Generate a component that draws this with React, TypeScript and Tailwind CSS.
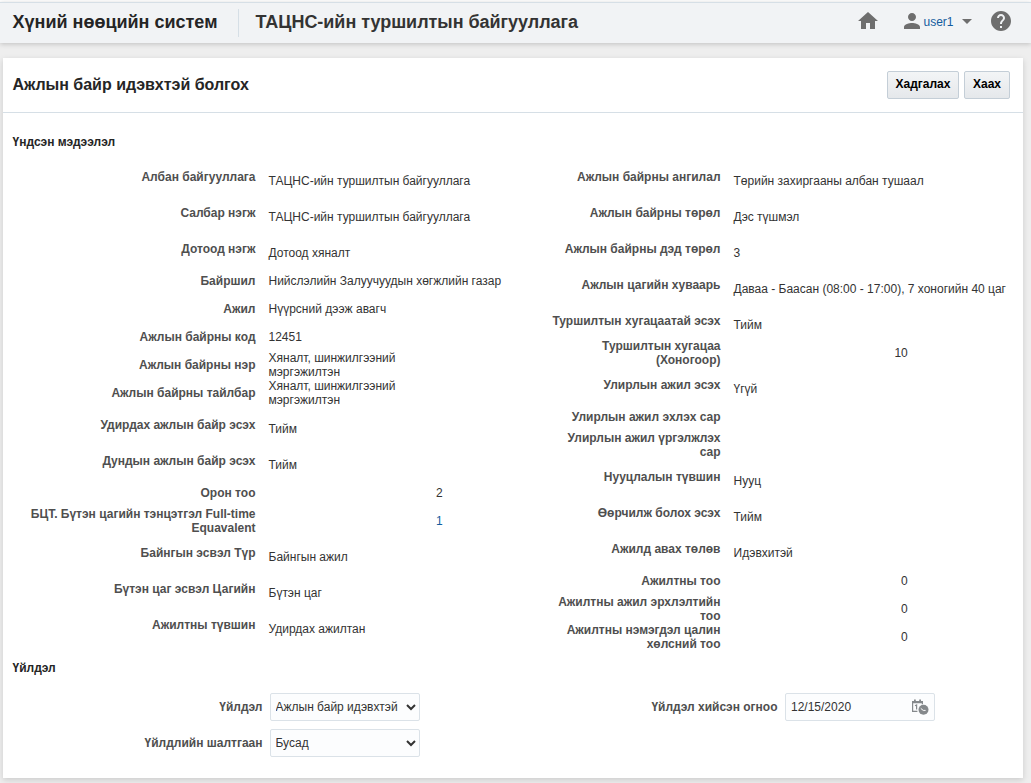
import React from "react";
import { MdHelp, MdHome, MdPerson } from "react-icons/md";

type Field = {
  label: string[];
  value?: string[];
  kind: "text" | "choice" | "number";
  tone?: string;
};

const leftFields: Field[] = [
  { label: ["Албан байгууллага"], value: ["ТАЦНС-ийн туршилтын байгууллага"], kind: "choice" },
  { label: ["Салбар нэгж"], value: ["ТАЦНС-ийн туршилтын байгууллага"], kind: "choice" },
  { label: ["Дотоод нэгж"], value: ["Дотоод хяналт"], kind: "choice" },
  { label: ["Байршил"], value: ["Нийслэлийн Залуучуудын хөгжлийн газар"], kind: "text" },
  { label: ["Ажил"], value: ["Нүүрсний дээж авагч"], kind: "text" },
  { label: ["Ажлын байрны код"], value: ["12451"], kind: "text" },
  { label: ["Ажлын байрны нэр"], value: ["Хяналт, шинжилгээний", "мэргэжилтэн"], kind: "text" },
  { label: ["Ажлын байрны тайлбар"], value: ["Хяналт, шинжилгээний", "мэргэжилтэн"], kind: "text" },
  { label: ["Удирдах ажлын байр эсэх"], value: ["Тийм"], kind: "choice" },
  { label: ["Дундын ажлын байр эсэх"], value: ["Тийм"], kind: "choice" },
  { label: ["Орон тоо"], value: ["2"], kind: "number" },
  {
    label: ["БЦТ. Бүтэн цагийн тэнцэтгэл Full-time", "Equavalent"],
    value: ["1"],
    kind: "number",
    tone: "text-[#145c9e]",
  },
  { label: ["Байнгын эсвэл Түр"], value: ["Байнгын ажил"], kind: "choice" },
  { label: ["Бүтэн цаг эсвэл Цагийн"], value: ["Бүтэн цаг"], kind: "choice" },
  { label: ["Ажилтны түвшин"], value: ["Удирдах ажилтан"], kind: "choice" },
];

const rightFields: Field[] = [
  { label: ["Ажлын байрны ангилал"], value: ["Төрийн захиргааны албан тушаал"], kind: "choice" },
  { label: ["Ажлын байрны төрөл"], value: ["Дэс түшмэл"], kind: "choice" },
  { label: ["Ажлын байрны дэд төрөл"], value: ["3"], kind: "choice" },
  { label: ["Ажлын цагийн хуваарь"], value: ["Даваа - Баасан (08:00 - 17:00), 7 хоногийн 40 цаг"], kind: "choice" },
  { label: ["Туршилтын хугацаатай эсэх"], value: ["Тийм"], kind: "choice" },
  { label: ["Туршилтын хугацаа", "(Хоногоор)"], value: ["10"], kind: "number" },
  { label: ["Улирлын ажил эсэх"], value: ["Үгүй"], kind: "choice" },
  { label: ["Улирлын ажил эхлэх сар"], kind: "text" },
  { label: ["Улирлын ажил үргэлжлэх", "сар"], kind: "text" },
  { label: ["Нууцлалын түвшин"], value: ["Нууц"], kind: "choice" },
  { label: ["Өөрчилж болох эсэх"], value: ["Тийм"], kind: "choice" },
  { label: ["Ажилд авах төлөв"], value: ["Идэвхитэй"], kind: "choice" },
  { label: ["Ажилтны тоо"], value: ["0"], kind: "number" },
  { label: ["Ажилтны ажил эрхлэлтийн", "тоо"], value: ["0"], kind: "number" },
  { label: ["Ажилтны нэмэгдэл цалин", "хөлсний тоо"], value: ["0"], kind: "number" },
];

function Lines({ lines }: { lines: string[] }) {
  return (
    <>
      {lines.map((line) => (
        <span key={line} className="block">
          {line}
        </span>
      ))}
    </>
  );
}

function FieldRow({ field }: { field: Field }) {
  const choice = field.kind === "choice";
  return (
    <div className={`flex items-center whitespace-nowrap leading-[14px] ${choice ? "h-9" : "h-7"}`}>
      <div className="w-[252.5px] shrink-0 text-right font-bold text-[#4f4f4f]">
        <Lines lines={field.label} />
      </div>
      <div
        className={`ml-[13px] ${choice ? "pt-2" : ""} ${field.kind === "number" ? "w-[174.3px] text-right" : ""} ${
          field.tone ?? "text-[#333333]"
        }`}
      >
        <Lines lines={field.value ?? []} />
      </div>
    </div>
  );
}

function CalendarIcon() {
  return (
    <svg width="17" height="17" viewBox="0 0 17 17" fill="none">
      <path d="M5.4 12.4H.6V2.6h9.8V6" stroke="#85898c" strokeWidth="1.2" />
      <path d="M0 2h11v2.2H0zM2 .5h1.8v2H2zM7.2.5H9v2H7.2z" fill="#85898c" />
      <path d="M3 6.8 4.6 6v4.6" stroke="#85898c" strokeWidth="1.2" />
      <circle cx="11.5" cy="10.8" r="5.7" fill="#fcfdfe" />
      <circle cx="11.5" cy="10.8" r="5" fill="#85898c" />
      <path d="M8.8 9.4 11.2 11.4h2.4" stroke="#fff" strokeWidth="1" />
    </svg>
  );
}

const inputBox = "h-7 w-[150px] rounded-[2px] border border-[#dbe2e8] bg-[#fcfdfe] text-[#333333]";

const actionButton =
  "h-7 rounded-[2px] border border-[#c4ced7] bg-linear-to-b from-[#f3f5f6] to-[#e5e8eb] pb-0.5 font-bold text-black";

export default function App() {
  return (
    <div className="flex h-[783px] w-[1031px] flex-col overflow-hidden bg-[#eeeeee] font-['Liberation_Sans',Arial,sans-serif] text-xs text-[#333333]">
      <div className="h-0.5 shrink-0 bg-white" />
      <header className="flex h-[41px] shrink-0 items-center border-t border-[#d6dfe6] bg-[#f1f3f5] pl-[12.5px] shadow-[0_1px_5px_0_rgba(0,0,0,0.2)]">
        <h1 className="w-[225.5px] pb-0.5 text-[18px] leading-5 font-bold whitespace-nowrap text-[#252525]">
          Хүний нөөцийн систем
        </h1>
        <div className="h-7 w-px bg-[#d6dfe6]" />
        <h2 className="ml-[16.5px] pb-0.5 text-[18px] leading-5 font-bold tracking-[-0.03px] whitespace-nowrap text-[#333333]">
          ТАЦНС-ийн туршилтын байгууллага
        </h2>
        <div className="ml-auto flex items-center pr-[18.5px] pb-1 text-[#6e6e6e]">
          <MdHome size={24} className="mr-5" />
          <MdPerson size={24} />
          <span className="w-[38px] pt-px text-[#145c9e]">user1</span>
          <svg width="10" height="5" viewBox="0 0 10 5">
            <path d="M0 0h10L5 5z" fill="currentColor" />
          </svg>
          <MdHelp size={24} className="ml-[17px]" />
        </div>
      </header>

      <main className="mt-[15px] ml-[3px] h-[720px] w-[1020px] shrink-0 bg-white shadow-[0_2px_6px_0_rgba(0,0,0,0.15)]">
        <div className="flex h-[55px] items-center border-b border-[#d6dfe6] pr-[13px] pl-[9.5px]">
          <h2 className="mr-auto text-base leading-5 font-bold text-[#252525]">Ажлын байр идэвхтэй болгох</h2>
          <button className={`${actionButton} w-[72px]`}>Хадгалах</button>
          <button className={`${actionButton} ml-[5px] w-[46px]`}>Хаах</button>
        </div>

        <h3 className="mt-[22px] pl-[9.5px] leading-[14px] font-bold text-[#252525]">Үндсэн мэдээлэл</h3>
        <div className="mt-2.5 flex h-[492px]">
          <div className="w-[465px] shrink-0">
            {leftFields.map((field) => (
              <FieldRow key={field.label[0]} field={field} />
            ))}
          </div>
          <div>
            {rightFields.map((field) => (
              <FieldRow key={field.label[0]} field={field} />
            ))}
          </div>
        </div>

        <h3 className="mt-[10px] pl-[9.5px] leading-[14px] font-bold text-[#252525]">Үйлдэл</h3>
        <div className="mt-[18px] flex leading-[14px]">
          <div className="flex flex-col gap-2">
            <label className="flex items-center">
              <span className="mr-[7.5px] w-[259.5px] text-right font-bold text-[#4f4f4f]">Үйлдэл</span>
              <select className={`${inputBox} pr-px pl-[0.5px]`}>
                <option>Ажлын байр идэвхтэй</option>
              </select>
            </label>
            <label className="flex items-center">
              <span className="mr-[7.5px] w-[259.5px] text-right font-bold text-[#4f4f4f]">Үйлдлийн шалтгаан</span>
              <select className={`${inputBox} pr-px pl-[0.5px]`}>
                <option>Бусад</option>
              </select>
            </label>
          </div>
          <div className="flex h-7 items-center">
            <span className="mr-[7.5px] w-[357.5px] text-right font-bold text-[#4f4f4f]">Үйлдэл хийсэн огноо</span>
            <div className={`${inputBox} flex items-center justify-between pr-[5px] pl-[5px]`}>
              <span>12/15/2020</span>
              <CalendarIcon />
            </div>
          </div>
        </div>
      </main>
    </div>
  );
}
